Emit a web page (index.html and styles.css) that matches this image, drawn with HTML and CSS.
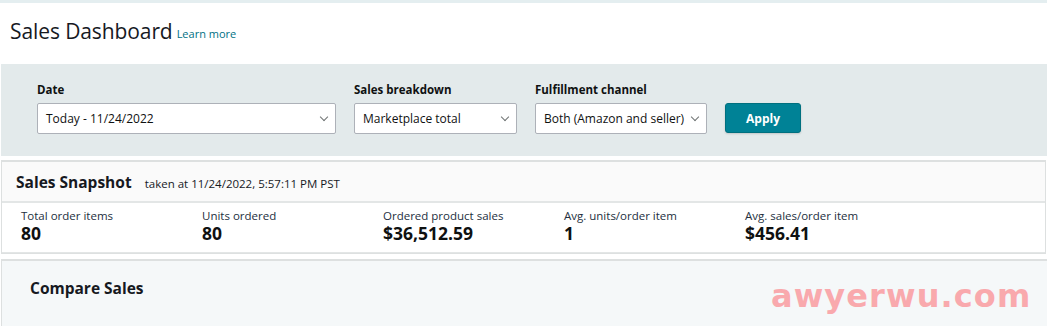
FILE: index.html
```html
<!DOCTYPE html>
<html lang="en">
<head>
  <meta charset="UTF-8" />
  <meta name="viewport" content="width=device-width, initial-scale=1.0"/>
  <title>Sales Dashboard</title>
  <link rel="stylesheet" href="styles.css">
</head>
<body>

<div class="topstrip"></div>

<!-- PAGE TITLE -->
<div class="page-title">
  <h1>Sales Dashboard</h1>
  <a href="#" class="learn">Learn more</a>
</div>

<!-- FILTERS -->
<div class="filters">
  <div class="field">
    <label>Date</label>
    <div class="select w-date">Today - 11/24/2022<span class="caret"></span></div>
  </div>
  <div class="field">
    <label>Sales breakdown</label>
    <div class="select w-break">Marketplace total<span class="caret"></span></div>
  </div>
  <div class="field">
    <label>Fulfillment channel</label>
    <div class="select w-ful">Both (Amazon and seller)<span class="caret"></span></div>
  </div>
  <button class="apply">Apply</button>
</div>

<!-- SNAPSHOT -->
<div class="snapshot">
  <div class="snap-head">
    <h2>Sales Snapshot</h2>
    <span class="taken">taken at 11/24/2022, 5:57:11 PM PST</span>
  </div>
  <div class="metrics">
    <div class="metric"><div class="m-label">Total order items</div><div class="m-value">80</div></div>
    <div class="metric"><div class="m-label">Units ordered</div><div class="m-value">80</div></div>
    <div class="metric"><div class="m-label">Ordered product sales</div><div class="m-value">$36,512.59</div></div>
    <div class="metric"><div class="m-label">Avg. units/order item</div><div class="m-value">1</div></div>
    <div class="metric"><div class="m-label">Avg. sales/order item</div><div class="m-value">$456.41</div></div>
  </div>
</div>

<!-- COMPARE -->
<div class="compare">
  <h2>Compare Sales</h2>
  <div class="watermark">awyerwu.com</div>
</div>

</body>
</html>
```

FILE: styles.css
```css
* { box-sizing: border-box; }
body, html {
  margin: 0; padding: 0;
  font-family: 'Open Sans', 'Noto Sans', sans-serif;
  background: #fff;
  color: #0f1111;
  overflow: hidden;
}
.topstrip { height: 3px; background: #e4eef0; }

.page-title { display: flex; align-items: baseline; padding: 14px 10px 0; height: 61px; }
.page-title h1 { margin: 0; font-size: 21px; font-weight: 400; color: #16191f; letter-spacing: -0.1px; }
.learn { font-size: 11px; color: #007185; text-decoration: none; margin-left: 4px; position: relative; top: -1px; }

.filters {
  background: #e3eaeb;
  height: 92px;
  margin-left: 1px;
  display: flex; align-items: flex-end;
  padding: 0 0 22px 36px;
}
.field { margin-right: 18px; }
.field label { display: block; font-size: 11.5px; font-weight: 700; margin-bottom: 6px; color: #0f1111; }
.select {
  height: 31px; background: #fff; border: 1px solid #adb1b8; border-radius: 2px;
  font-size: 12px; line-height: 29px; padding-left: 8px; color: #0f1111;
  position: relative;
}
.w-date { width: 299px; }
.w-break { width: 163px; }
.w-ful { width: 172px; }
.caret {
  position: absolute; right: 8px; top: 10px;
  width: 6px; height: 6px;
  border-right: 1.5px solid #6f7373; border-bottom: 1.5px solid #6f7373;
  transform: rotate(45deg);
}
.apply {
  width: 76px; height: 30px; margin-bottom: 1px;
  background: #008296; color: #fff; border: 1px solid #00707f; border-radius: 3px;
  font-family: inherit; font-size: 12px; font-weight: 700;
  box-shadow: 0 1px 2px rgba(0,0,0,0.15);
}

.snapshot {
  margin: 4px 1px 0 1px;
  border: 1px solid #dde0e0;
  border-top-width: 2px;
}
.snap-head {
  display: flex; align-items: baseline;
  height: 41px; padding: 9px 0 0 14px;
  background: #fafafa; border-bottom: 2px solid #e3e6e6;
}
.snap-head h2 { margin: 0; font-size: 15.5px; font-weight: 700; color: #16191f; }
.taken { font-size: 11.5px; margin-left: 13px; color: #16191f; }
.metrics { display: flex; padding: 5px 0 9px 19px; border-bottom: 1px solid #e3e6e6; }
.metric { width: 181px; }
.m-label { font-size: 11.5px; color: #232f3e; line-height: 15px; }
.m-value { font-size: 17.5px; font-weight: 700; line-height: 20px; color: #0f1111; }

.compare {
  position: relative;
  margin: 5px 0 0 1px;
  height: 80px;
  background: #f5f8f9;
  border-top: 2px solid #dde0e0;
  border-left: 1px solid #dde0e0;
  padding: 16px 0 0 28px;
}
.compare h2 { margin: 0; font-size: 15.5px; font-weight: 700; color: #16191f; }
.watermark {
  position: absolute; left: 769px; top: 16px;
  font-family: 'DejaVu Sans', sans-serif; font-size: 32px; font-weight: 700;
  color: #f9a9ad; letter-spacing: 1.1px;
}
```
